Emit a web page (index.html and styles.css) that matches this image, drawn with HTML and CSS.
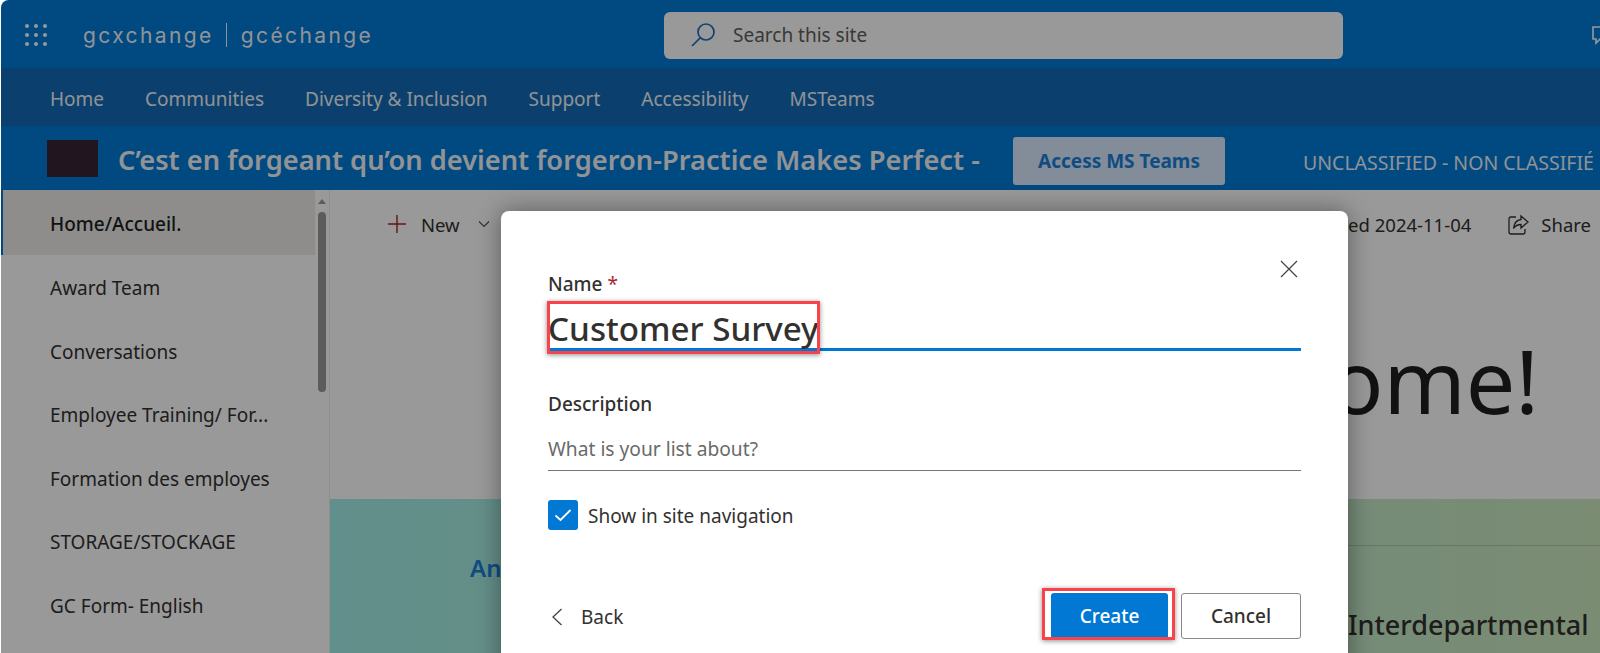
FILE: index.html
```html
<!DOCTYPE html>
<html lang="en">
<head>
    <meta charset="UTF-8">
    <title>gcxchange - Create list</title>
    <link rel="stylesheet" href="styles.css">
</head>
<body>
    <div class="page">
        <header class="topbar">
            <svg class="waffle" width="24" height="24" viewBox="0 0 24 24" fill="#fff">
                <circle cx="3" cy="3" r="2"/><circle cx="12" cy="3" r="2"/><circle cx="21" cy="3" r="2"/>
                <circle cx="3" cy="12" r="2"/><circle cx="12" cy="12" r="2"/><circle cx="21" cy="12" r="2"/>
                <circle cx="3" cy="21" r="2"/><circle cx="12" cy="21" r="2"/><circle cx="21" cy="21" r="2"/>
            </svg>
            <div class="logo">
                <span>gcxchange</span>
                <i class="logo-divider"></i>
                <span>gcéchange</span>
            </div>
            <div class="search">
                <svg width="26" height="26" viewBox="0 0 26 26" fill="none" stroke="#1f6fc0" stroke-width="1.7">
                    <circle cx="16" cy="10" r="8"/>
                    <path d="M10.2 15.8 2 24"/>
                </svg>
                <span>Search this site</span>
            </div>
            <svg class="top-icon" width="24" height="24" viewBox="0 0 24 24" fill="none" stroke="#fff" stroke-width="1.6">
                <path d="M2 4h16a2 2 0 0 1 2 2v8a2 2 0 0 1-2 2h-9l-4 4v-4H2z"/>
            </svg>
        </header>

        <nav class="sitenav">
            <a>Home</a>
            <a>Communities</a>
            <a>Diversity &amp; Inclusion</a>
            <a>Support</a>
            <a>Accessibility</a>
            <a>MSTeams</a>
        </nav>

        <div class="banner">
            <div class="banner-logo"></div>
            <h1>C’est en forgeant qu’on devient forgeron-Practice Makes Perfect -</h1>
            <button class="teams-btn">Access MS Teams</button>
            <span class="classification">UNCLASSIFIED - NON CLASSIFIÉ</span>
        </div>

        <div class="content">
            <aside class="sidebar">
                <ul class="side-list">
                    <li class="active">Home/Accueil.</li>
                    <li>Award Team</li>
                    <li>Conversations</li>
                    <li>Employee Training/ For...</li>
                    <li>Formation des employes</li>
                    <li>STORAGE/STOCKAGE</li>
                    <li>GC Form- English</li>
                </ul>
                <div class="scrollbar">
                    <i class="scroll-up"></i>
                    <i class="scroll-thumb"></i>
                </div>
            </aside>

            <main class="main">
                <div class="commandbar">
                    <div class="cmd-new">
                        <svg width="20" height="20" viewBox="0 0 20 20" stroke="#a4262c" stroke-width="1.4">
                            <path d="M10 1v18M1 10h18"/>
                        </svg>
                        <span>New</span>
                        <svg class="cmd-chevron" width="12" height="8" viewBox="0 0 12 8" fill="none" stroke="#555" stroke-width="1.2">
                            <path d="M1 1.5 6 6.5l5-5"/>
                        </svg>
                    </div>
                    <div class="cmd-right">
                        <span>Published 2024-11-04</span>
                        <div class="cmd-share">
                            <svg width="21" height="21" viewBox="0 0 21 21" fill="none" stroke="#323130" stroke-width="1.3">
                                <path d="M8 3H3a2 2 0 0 0-2 2v13a2 2 0 0 0 2 2h12a2 2 0 0 0 2-2v-3"/>
                                <path d="M13 2l7 6-7 6v-3.5c-3.500 0-5.500 1-7.500 4 .5-5 3-8.500 7.500-9z"/>
                            </svg>
                            <span>Share</span>
                        </div>
                    </div>
                </div>
                <div class="welcome">Welcome!</div>
                <div class="hero">
                    <div class="hero-left"><h2>Announcements</h2></div>
                    <div class="hero-right"><h3>Interdepartmental</h3></div>
                </div>
            </main>
        </div>

        <div class="overlay"></div>

        <div class="dialog">
            <svg class="dialog-close" width="18" height="18" viewBox="0 0 18 18" stroke="#444" stroke-width="1.2">
                <path d="M1 1l16 16M17 1 1 17"/>
            </svg>
            <label class="field-label">Name <b>*</b></label>
            <div class="name-field">
                <span class="name-value">Customer Survey</span>
                <i class="callout callout-name"></i>
            </div>
            <label class="field-label desc-label">Description</label>
            <div class="desc-field">What is your list about?</div>
            <div class="check-row">
                <span class="checkbox">
                    <svg width="18" height="14" viewBox="0 0 18 14" fill="none" stroke="#fff" stroke-width="1.8">
                        <path d="M1.500 7.500 6.500 12 16.500 2"/>
                    </svg>
                </span>
                <span class="check-label">Show in site navigation</span>
            </div>
            <div class="dialog-footer">
                <div class="back">
                    <svg width="12" height="18" viewBox="0 0 12 18" fill="none" stroke="#444" stroke-width="1.3">
                        <path d="M10.500 1 2 9l8.500 8"/>
                    </svg>
                    <span>Back</span>
                </div>
                <div class="footer-buttons">
                    <button class="btn btn-primary">Create<i class="callout callout-create"></i></button>
                    <button class="btn btn-default">Cancel</button>
                </div>
            </div>
        </div>
    </div>
</body>
</html>
```

FILE: styles.css
```css
* {
    box-sizing: border-box;
}

html, body {
    margin: 0;
    height: 100%;
    background: #fff;
    overflow: hidden;
}

body {
    font-family: "Noto Sans", "Open Sans", Arial, sans-serif;
    color: #323130;
}

.page {
    position: relative;
    width: 1599px;
    height: 653px;
    margin-left: 1px;
    overflow: hidden;
    border-top-left-radius: 8px;
    display: flex;
    flex-direction: column;
}

/* top suite bar */
.topbar {
    height: 68px;
    flex: none;
    display: flex;
    align-items: center;
    background: #007ad8;
    padding: 2px 0 0 23px;
    position: relative;
}

.waffle {
    flex: none;
}

.logo {
    display: flex;
    align-items: center;
    flex: none;
    margin-left: 35px;
    width: 581px;
    font-family: "Inter", sans-serif;
    font-size: 21px;
    font-weight: 400;
    letter-spacing: 2.4px;
    color: #f2f6fa;
}

.logo-divider {
    width: 1px;
    height: 24px;
    background: #f2f6fa;
    margin: 0 14px 0 12px;
}

.search {
    width: 679px;
    height: 47px;
    flex: none;
    background: #fff;
    border-radius: 6px;
    display: flex;
    align-items: center;
    padding-left: 26px;
    gap: 17px;
    font-size: 19px;
    color: #605e5c;
}

.top-icon {
    margin-left: 248px;
    flex: none;
}

/* site navigation */
.sitenav {
    height: 58px;
    flex: none;
    display: flex;
    align-items: center;
    gap: 41px;
    padding: 3px 0 0 49px;
    background: #126ab8;
    font-size: 19px;
    color: #f0f4f8;
}

/* site title banner */
.banner {
    height: 64px;
    flex: none;
    display: flex;
    align-items: center;
    background: #007ad8;
    color: #fff;
    padding-left: 46px;
}

.banner-logo {
    width: 51px;
    height: 37px;
    background: #372534;
    flex: none;
}

.banner h1 {
    margin: 2px 0 0 20px;
    width: 895px;
    flex: none;
    font-size: 27.25px;
    font-weight: 600;
    white-space: nowrap;
    color: #f4f6f8;
}

.teams-btn {
    width: 212px;
    height: 48px;
    flex: none;
    margin-top: 6px;
    border: none;
    border-radius: 3px;
    background: #dae9ff;
    color: #197fd7;
    font-family: inherit;
    font-size: 19px;
    font-weight: 700;
}

.classification {
    margin: 8px 0 0 78px;
    font-size: 19.500px;
    white-space: nowrap;
    color: #f0f4f8;
}

.content {
    flex: 1;
    display: flex;
    min-height: 0;
}

/* left navigation */
.sidebar {
    width: 330px;
    flex: none;
    display: flex;
    border-right: 1px solid #eee;
    border-left: 3px solid transparent;
    margin-left: -1px;
    font-size: 19px;
}

.side-list {
    list-style: none;
    margin: 0;
    padding: 0;
    flex: 1;
}

.side-list li {
    height: 63.5px;
    display: flex;
    align-items: center;
    padding: 3px 0 0 47px;
    white-space: nowrap;
}

.side-list li.active {
    height: 65px;
    margin-left: -3px;
    padding-left: 47px;
    background: #edebe9;
    border-left: 3px solid #0078d4;
    font-weight: 500;
    color: #201f1e;
}

.scrollbar {
    width: 14px;
    flex: none;
    padding: 9px 3px 0;
    display: flex;
    flex-direction: column;
    align-items: center;
}

.scroll-up {
    width: 0;
    height: 0;
    border-left: 4px solid transparent;
    border-right: 4px solid transparent;
    border-bottom: 5px solid #999;
}

.scroll-thumb {
    width: 8px;
    height: 180px;
    margin-top: 8px;
    border-radius: 4px;
    background: #9a9a9a;
}

/* page content */
.main {
    flex: 1;
    display: flex;
    flex-direction: column;
    min-width: 0;
}

.commandbar {
    height: 68px;
    flex: none;
    display: flex;
    align-items: center;
    justify-content: space-between;
    padding: 0 9px 0 57px;
    font-size: 18.500px;
}

.cmd-new {
    display: flex;
    align-items: center;
    gap: 14px;
}

.cmd-chevron {
    margin-left: 4px;
}

.cmd-right {
    display: flex;
    align-items: center;
    gap: 37px;
}

.cmd-share {
    display: flex;
    align-items: center;
    gap: 12px;
}

.welcome {
    height: 241px;
    flex: none;
    text-align: right;
    padding: 62px 61px 0 0;
    font-size: 88px;
    line-height: 120px;
    color: #201f1e;
}

.hero {
    flex: 1;
    display: grid;
    grid-template-columns: 1fr 252px;
    background: linear-gradient(90deg, #a2eee8, #cde9c0);
}

.hero-left h2 {
    margin: 52px 0 0 140px;
    font-size: 24px;
    font-weight: 600;
    color: #197fd7;
}

.hero-right {
    margin-top: 46px;
    border-top: 1px solid #b0c4a8;
}

.hero-right h3 {
    margin: 60px 0 0;
    font-size: 27px;
    font-weight: 500;
    white-space: nowrap;
}

.overlay {
    position: absolute;
    inset: 0;
    background: rgba(0, 0, 0, 0.4);
}

/* create list dialog */
.dialog {
    position: absolute;
    left: 500px;
    top: 211px;
    width: 847px;
    height: 470px;
    background: #fff;
    border-radius: 8px;
    box-shadow: 0 0 24px rgba(0, 0, 0, 0.4);
    padding: 60px 47px 0;
    font-size: 19px;
}

.dialog-close {
    position: absolute;
    top: 49px;
    right: 50px;
}

.field-label {
    display: block;
    font-weight: 500;
    line-height: 26px;
}

.field-label b {
    color: #a4262c;
    font-weight: 400;
}

.name-field {
    position: relative;
    height: 54px;
    border-bottom: 3px solid #0078d4;
    padding-top: 11px;
}

.name-value {
    font-size: 33.200px;
    font-weight: 500;
    line-height: 42px;
    white-space: nowrap;
}

.callout {
    position: absolute;
    border: 3px solid #f9434b;
    box-shadow: 0 1px 5px rgba(0, 0, 0, 0.45);
}

.callout-name {
    left: -1px;
    top: 4px;
    width: 273px;
    height: 53px;
}

.desc-label {
    margin-top: 40px;
}

.desc-field {
    margin-top: 16px;
    height: 38px;
    line-height: 32px;
    border-bottom: 1px solid #777;
    font-size: 19.200px;
    color: #6a6a6a;
}

.check-row {
    display: flex;
    align-items: center;
    gap: 10px;
    margin-top: 29px;
}

.check-label {
    padding-top: 2px;
}

.checkbox {
    width: 30px;
    height: 30px;
    border-radius: 3px;
    background: #0078d4;
    display: flex;
    align-items: center;
    justify-content: center;
}

.dialog-footer {
    display: flex;
    align-items: center;
    justify-content: space-between;
    margin-top: 63px;
}

.back {
    display: flex;
    align-items: center;
    gap: 18px;
    padding: 1px 0 0 3px;
}

.footer-buttons {
    display: flex;
    gap: 13px;
}

.btn {
    position: relative;
    height: 46px;
    border-radius: 3px;
    font-family: inherit;
    font-size: 19px;
    font-weight: 500;
    padding: 0;
}

.btn-primary {
    width: 117px;
    background: #0078d4;
    color: #fff;
    border: none;
}

.btn-default {
    width: 120px;
    background: #fff;
    color: #323130;
    border: 1px solid #8a8886;
}

.callout-create {
    left: -9px;
    top: -5px;
    width: 133px;
    height: 52px;
}
```
